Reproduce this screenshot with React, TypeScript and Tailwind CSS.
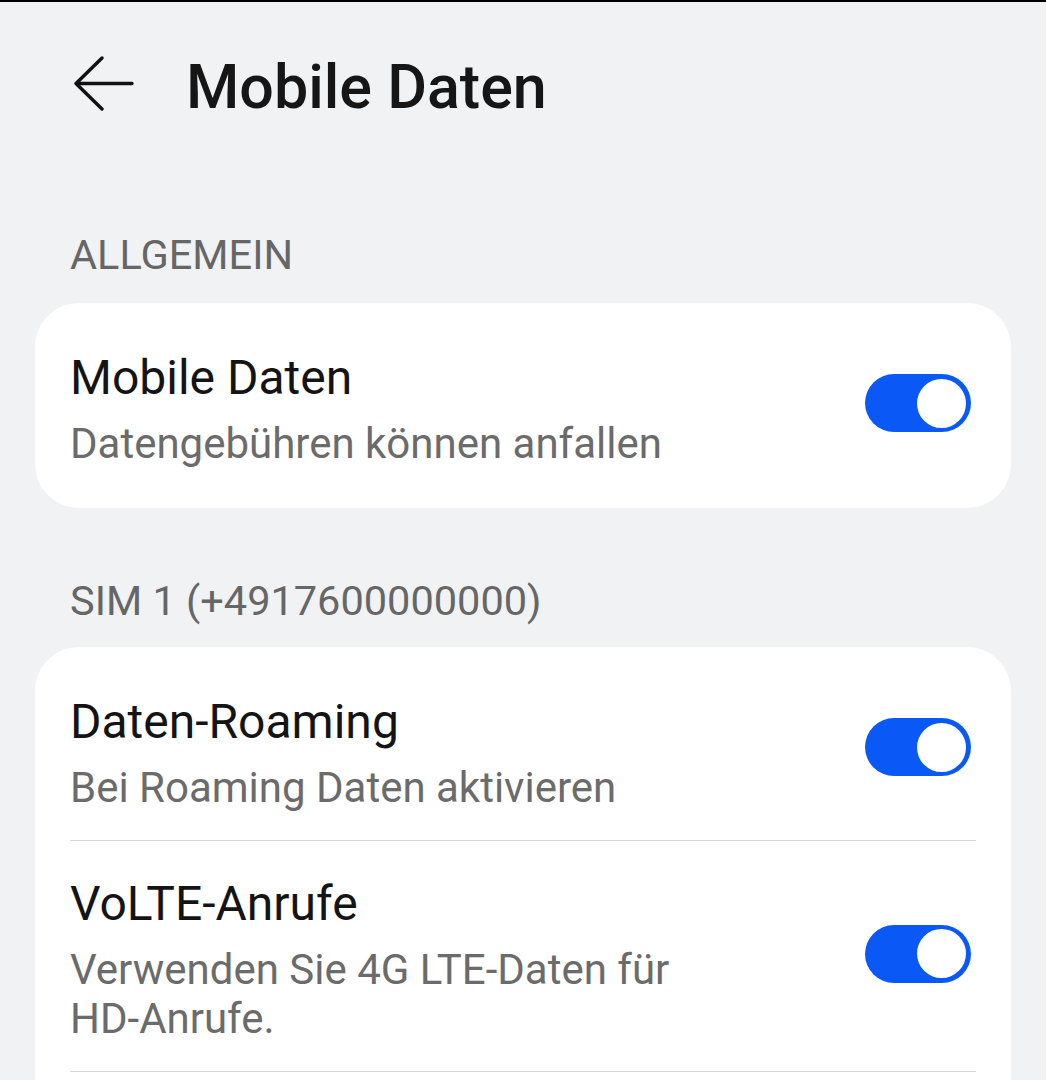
import type { ReactNode } from "react";

function BackArrow() {
  return (
    <svg width="60" height="56" viewBox="0 0 60 56" fill="none" className="shrink-0">
      <path
        d="M28 3 L2 28.5 L28 54 M2 28.5 H58"
        stroke="#111111"
        strokeWidth="3.4"
        strokeLinecap="round"
        strokeLinejoin="round"
      />
    </svg>
  );
}

function Toggle({ on = true }: { on?: boolean }) {
  return (
    <div
      className={`mb-[12px] mr-[5px] flex h-[58px] w-[106px] shrink-0 items-center rounded-full px-[5px] ${
        on ? "justify-end bg-[#0a59f7]" : "justify-start bg-[#d9d9d9]"
      }`}
    >
      <div className="h-[49px] w-[49px] rounded-full bg-white" />
    </div>
  );
}

function SectionLabel({ children }: { children: ReactNode }) {
  return (
    <div className="pl-[35px] text-[41.5px] leading-[49px] text-[#666666]">{children}</div>
  );
}

function SwitchRow({ title, subtitle }: { title: string; subtitle: ReactNode }) {
  return (
    <div className="flex items-center gap-[35px] pb-[28px] pt-[35px]">
      <div className="min-w-0 flex-1">
        <div className="text-[48px] leading-[56px] text-[#141414]">{title}</div>
        <div className="mt-[13px] text-[42px] leading-[49px] text-[#6b6b6b]">{subtitle}</div>
      </div>
      <Toggle />
    </div>
  );
}

export default function App() {
  return (
    <div className="min-h-[1080px] border-t-2 border-black bg-[#f1f2f4] font-[Roboto,'Noto_Sans',sans-serif]">
      <header className="flex items-start pl-[74px] pt-[53px]">
        <BackArrow />
        <h1 className="-mt-[3px] ml-[52px] text-[61px] font-medium leading-[70px] text-[#161616]">
          Mobile Daten
        </h1>
      </header>

      <main className="px-[35px] pt-[108px]">
        <SectionLabel>ALLGEMEIN</SectionLabel>
        <section className="mt-[24px] rounded-[44px] bg-white px-[35px] py-[12px]">
          <SwitchRow title="Mobile Daten" subtitle="Datengebühren können anfallen" />
        </section>

        <div className="mt-[68px]">
          <SectionLabel>SIM 1 (+4917600000000)</SectionLabel>
        </div>
        <section className="mt-[22px] rounded-t-[44px] bg-white px-[35px] pb-[80px] pt-[12px]">
          <SwitchRow title="Daten-Roaming" subtitle="Bei Roaming Daten aktivieren" />
          <div className="h-px bg-[#d6d6d6]" />
          <SwitchRow
            title="VoLTE-Anrufe"
            subtitle={
              <>
                Verwenden Sie 4G LTE-Daten für{" "}
                <span className="whitespace-nowrap">HD-Anrufe.</span>
              </>
            }
          />
          <div className="h-px bg-[#d6d6d6]" />
        </section>
      </main>
    </div>
  );
}
